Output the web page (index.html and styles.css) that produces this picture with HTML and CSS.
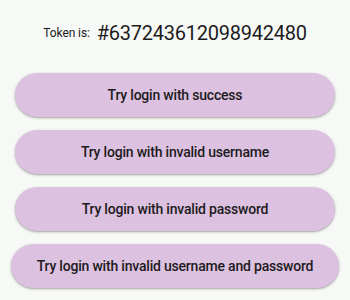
FILE: index.html
```
<!DOCTYPE html>
<html>
<head>
<meta charset="utf-8">
<link rel="stylesheet" href="styles.css">
</head>
<body>
<div class="page">
  <div class="token-row">
    <span class="token-label">Token is:</span>
    <span class="token-value">#637243612098942480</span>
  </div>
  <div class="buttons">
    <button class="btn">Try login with success</button>
    <button class="btn">Try login with invalid username</button>
    <button class="btn">Try login with invalid password</button>
    <button class="btn">Try login with invalid username and password</button>
  </div>
</div>
</body>
</html>
```
FILE: styles.css
```
html, body {
  margin: 0;
  padding: 0;
  background: #f7f9f6;
  font-family: Roboto, "Liberation Sans", sans-serif;
}
.page {
  width: 350px;
  height: 300px;
  overflow: hidden;
  display: flex;
  flex-direction: column;
  align-items: center;
}
.token-row {
  display: flex;
  align-items: center;
  gap: 7px;
  height: 28px;
  margin-top: 19px;
  color: #1c1c1c;
}
.token-label {
  font-size: 12px;
  letter-spacing: -0.1px;
}
.token-value {
  font-size: 20px;
  letter-spacing: -0.25px;
}
.buttons {
  margin-top: 26px;
  display: flex;
  flex-direction: column;
  align-items: center;
  gap: 13px;
}
.btn {
  min-width: 320px;
  height: 44px;
  padding: 0 26px;
  border: none;
  border-radius: 22px;
  background: #dcc1e1;
  color: #1d1b20;
  font-family: Roboto, "Liberation Sans", sans-serif;
  font-weight: 500;
  font-size: 14px;
  letter-spacing: -0.2px;
  box-shadow: 0 1px 3px rgba(0,0,0,0.25), 0 1px 1px rgba(0,0,0,0.12);
}
```
